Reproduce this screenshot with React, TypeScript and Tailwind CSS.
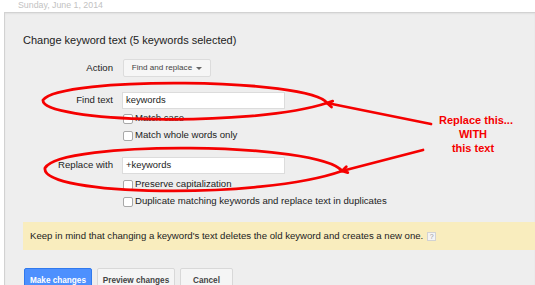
import type { ReactNode } from 'react';

function Checkbox({ label }: { label: string }) {
  return (
    <div className="flex h-[17px] items-center pl-[100px]">
      <span className="h-[10px] w-[10px] rounded-[2px] border border-[#a8a8a8] bg-white" />
      <span className="ml-[2px] text-[9.6px] text-[#222]">{label}</span>
    </div>
  );
}

function FieldRow({ label, children }: { label: string; children: ReactNode }) {
  return (
    <div className="flex items-center">
      <div className="w-[90px] text-right text-[9.6px] text-[#222]">{label}</div>
      <div className="ml-[9px]">{children}</div>
    </div>
  );
}

function TextInput({ value }: { value: string }) {
  return (
    <div className="flex h-[17px] w-[163px] items-center border border-[#dcdcdc] bg-white pl-[3px] text-[9.4px] text-[#222]">
      {value}
    </div>
  );
}

export default function App() {
  return (
    <div className="relative h-[285px] w-[535px] overflow-hidden bg-white font-['Liberation_Sans',Arial,sans-serif]">
      <div className="h-[12px] pl-[18px] text-[8.8px] leading-[10px] text-[#c2c2c2]">Sunday, June 1, 2014</div>

      <div className="ml-[4px] h-[273px] border-l border-t border-[#d2d2d2] bg-[#eeeeee] pl-[18px] pt-[19px] shadow-[inset_0_1px_2px_rgba(0,0,0,0.06)]">
        <div className="text-[11px] leading-[16px] text-[#222]">Change keyword text (5 keywords selected)</div>

        <div className="mt-[11px] flex h-[18px] items-center">
          <div className="w-[90px] text-right text-[9.6px] text-[#222]">Action</div>
          <div className="ml-[10px] flex h-[18px] w-[88px] items-center justify-center gap-[4px] rounded-[2px] border border-[#dcdcdc] bg-[#f6f6f6] text-[8.1px] text-[#444]">
            Find and replace
            <span className="mt-[1px] h-0 w-0 border-x-[3px] border-t-[3px] border-x-transparent border-t-[#666]" />
          </div>
        </div>

        <div className="mt-[15px]">
          <FieldRow label="Find text">
            <TextInput value="keywords" />
          </FieldRow>
        </div>
        <div className="mt-[1px]">
          <Checkbox label="Match case" />
          <Checkbox label="Match whole words only" />
        </div>

        <div className="mt-[13px]">
          <FieldRow label="Replace with">
            <TextInput value="+keywords" />
          </FieldRow>
        </div>
        <div className="mt-[2px]">
          <Checkbox label="Preserve capitalization" />
          <Checkbox label="Duplicate matching keywords and replace text in duplicates" />
        </div>

        <div className="mt-[12px] flex h-[28px] items-center bg-[#f9edbe] pl-[7px] text-[9.6px] text-[#222]">
          Keep in mind that changing a keyword's text deletes the old keyword and creates a new one.
          <span className="ml-[4px] flex h-[9px] w-[9px] items-center justify-center border border-[#d2d2d2] bg-[#f4f4f4] text-[7px] leading-none text-[#999]">
            ?
          </span>
        </div>

        <div className="mt-[18px] flex gap-[5px] pl-[1px]">
          <button className="h-[27px] w-[68px] rounded-[2px] border border-[#3079ed] bg-[#4d90fe] text-[8.2px] font-bold text-white">
            Make changes
          </button>
          <button className="h-[27px] w-[78px] rounded-[2px] border border-[#d8d8d8] bg-[#f5f5f5] text-[8.2px] font-bold text-[#444]">
            Preview changes
          </button>
          <button className="h-[27px] w-[53px] rounded-[2px] border border-[#d8d8d8] bg-[#f5f5f5] text-[8.2px] font-bold text-[#444]">
            Cancel
          </button>
        </div>
      </div>

      {/* red hand-drawn annotations */}
      <svg className="pointer-events-none absolute left-0 top-0" width="535" height="285" viewBox="0 0 535 285">
        <g fill="none" stroke="#f50000" strokeWidth="2.8" strokeLinecap="round" strokeLinejoin="round">
          <path d="M327 103 C310 78 60 76 43 100 C40 122 250 128 327 103" />
          <path d="M327 103 L431 124" />
          <path d="M331.5 107 L327 103 L332.7 101.1" />
          <path d="M342 171 C320 142 60 140 45 168 C40 196 260 200 342 171" />
          <path d="M342 171 L423 150" />
          <path d="M347.8 172.6 L342 171 L346.3 166.8" />
        </g>
      </svg>
      <div className="absolute left-[428px] top-[113px] w-[90px] text-center text-[11px] font-bold leading-[14px] text-[#f50000]">
        <div className="pl-[6px]">Replace this...</div>
        <div>WITH</div>
        <div>this text</div>
      </div>
    </div>
  );
}
